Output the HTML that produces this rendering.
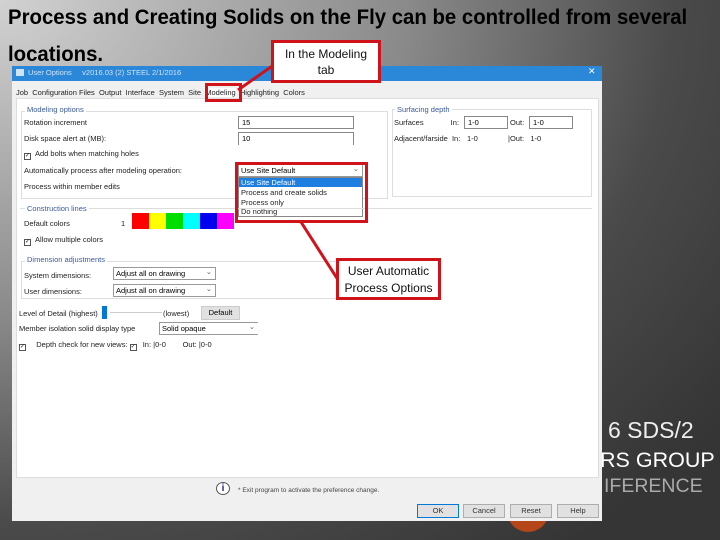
<!DOCTYPE html>
<html><head><meta charset="utf-8"><style>
*{margin:0;padding:0;box-sizing:border-box}
body{width:720px;height:540px;overflow:hidden;position:relative;font-family:"Liberation Sans",sans-serif;background:radial-gradient(ellipse 900px 700px at 0px 0px,#d2d2d2 0%,#8a8a8a 45%,#4a4a4a 75%,#353535 100%)}
.a{position:absolute;white-space:nowrap}
.t{font-weight:bold;font-size:21px;color:#000;transform:scaleX(0.97);transform-origin:left top}
.d{font-size:7.5px;color:#222}
.in{position:absolute;border:1px solid #888;background:#fff;font-size:7.5px;padding-left:3px;line-height:11px}
.sel{position:absolute;border:1px solid #999;background:#fff;font-size:7.5px;padding-left:2px;line-height:11px}
.sel:after{content:"⌄";position:absolute;right:3px;top:-2px;color:#666}
.grp{position:absolute;border:1px solid #ddd}
.gt{position:absolute;font-size:7.5px;color:#3a5a9a;background:#fff;padding:0 2px}
.cb{display:inline-block;width:7px;height:7px;border:1px solid #555;margin-right:4px;vertical-align:-1px;font-size:6px;line-height:5px}
.red{position:absolute;border:3px solid #d0121b}
.btn{position:absolute;top:504px;width:42px;height:14px;background:#e1e1e1;border:1px solid #adadad;font-size:7.5px;text-align:center;line-height:12px;color:#333}
</style></head><body>
<div class="a t" style="left:8px;top:6px">Process and Creating Solids on the Fly can be controlled from several</div>
<div class="a t" style="left:8px;top:43px">locations.</div>

<div class="a" style="left:507px;top:490px;width:42px;height:42px;border-radius:50%;background:#b5461a"></div>
<div class="a" style="left:608px;top:417px;font-size:23px;color:#eee">6 SDS/2</div>
<div class="a" style="left:600px;top:448px;font-size:21.5px;color:#fff">RS GROUP</div>
<div class="a" style="left:604px;top:475px;font-size:19.5px;color:#aaa">IFERENCE</div>

<div class="a" style="left:12px;top:66px;width:590px;height:455px;background:#f0f0f0"></div>
<div class="a" style="left:12px;top:66px;width:590px;height:15px;background:#2b88d8"></div>
<div class="a" style="left:16px;top:69px;width:8px;height:7px;background:#cfe3f5"></div>
<div class="a" style="left:28px;top:68px;font-size:7.5px;color:#cfe3f5">User Options &nbsp;&nbsp;&nbsp; v2016.03 (2) STEEL 2/1/2016</div>
<div class="a" style="left:588px;top:66px;font-size:9px;color:#fff">✕</div>
<div class="a d" style="left:16px;top:88px">Job&nbsp; Configuration Files&nbsp; Output&nbsp; Interface&nbsp; System&nbsp; Site&nbsp; <span style="background:#fff">Modeling</span>&nbsp; Highlighting&nbsp; Colors</div>
<div class="a" style="left:16px;top:98px;width:583px;height:380px;background:#fff;border:1px solid #ddd"></div>

<div class="grp" style="left:21px;top:111px;width:367px;height:88px"></div>
<div class="gt" style="left:25px;top:105px">Modeling options</div>
<div class="a d" style="left:24px;top:118px">Rotation increment</div>
<div class="in" style="left:238px;top:116px;width:116px;height:13px">15</div>
<div class="a d" style="left:24px;top:134px">Disk space alert at (MB):</div>
<div class="in" style="left:238px;top:132px;width:116px;height:13px;border-bottom:none">10</div>
<div class="a d" style="left:24px;top:149px"><span class="cb">✓</span>Add bolts when matching holes</div>
<div class="a d" style="left:24px;top:166px">Automatically process after modeling operation:</div>
<div class="sel" style="left:238px;top:164px;width:125px;height:13px">Use Site Default</div>
<div class="a" style="left:238px;top:177px;width:125px;height:40px;background:#fff;border:1px solid #888"></div>
<div class="a" style="left:239px;top:178px;width:123px;height:9px;background:#1e7fe0"></div>
<div class="a d" style="left:241px;top:178px;color:#fff">Use Site Default</div>
<div class="a d" style="left:241px;top:188px">Process and create solids</div>
<div class="a d" style="left:241px;top:198px">Process only</div>
<div class="a d" style="left:241px;top:207px">Do nothing</div>
<div class="a d" style="left:24px;top:182px">Process within member edits</div>

<div class="grp" style="left:392px;top:109px;width:200px;height:88px"></div>
<div class="gt" style="left:395px;top:105px">Surfacing depth</div>
<div class="a d" style="left:394px;top:118px">Surfaces &nbsp;&nbsp;&nbsp;&nbsp;&nbsp;&nbsp;&nbsp;&nbsp;&nbsp;&nbsp;&nbsp; In:</div>
<div class="in" style="left:464px;top:116px;width:44px;height:13px">1-0</div>
<div class="a d" style="left:510px;top:118px">Out:</div>
<div class="in" style="left:529px;top:116px;width:44px;height:13px">1-0</div>
<div class="a d" style="left:394px;top:134px">Adjacent/farside&nbsp; In:</div>
<div class="a d" style="left:467px;top:134px">1-0</div>
<div class="a d" style="left:508px;top:134px">|Out: &nbsp; 1-0</div>
<div class="a" style="left:20px;top:208px;width:572px;height:1px;background:#ddd"></div>

<div class="gt" style="left:25px;top:204px">Construction lines</div>
<div class="a d" style="left:24px;top:219px">Default colors</div>
<div class="a d" style="left:121px;top:219px">1</div>
<div class="a" style="left:132px;top:213px;width:17px;height:16px;background:#f00"></div>
<div class="a" style="left:149px;top:213px;width:17px;height:16px;background:#ff0"></div>
<div class="a" style="left:166px;top:213px;width:17px;height:16px;background:#0d0"></div>
<div class="a" style="left:183px;top:213px;width:17px;height:16px;background:#0ff"></div>
<div class="a" style="left:200px;top:213px;width:17px;height:16px;background:#00e"></div>
<div class="a" style="left:217px;top:213px;width:17px;height:16px;background:#f0f"></div>
<div class="a d" style="left:24px;top:235px"><span class="cb">✓</span>Allow multiple colors</div>

<div class="grp" style="left:21px;top:261px;width:365px;height:38px"></div>
<div class="gt" style="left:25px;top:255px">Dimension adjustments</div>
<div class="a d" style="left:24px;top:271px">System dimensions:</div>
<div class="sel" style="left:113px;top:267px;width:103px;height:13px">Adjust all on drawing</div>
<div class="a d" style="left:24px;top:287px">User dimensions:</div>
<div class="sel" style="left:113px;top:284px;width:103px;height:13px">Adjust all on drawing</div>

<div class="a d" style="left:19px;top:309px">Level of Detail (highest)</div>
<div class="a" style="left:110px;top:312px;width:52px;height:1px;background:#ccc"></div>
<div class="a" style="left:102px;top:306px;width:5px;height:13px;background:#0078d7"></div>
<div class="a d" style="left:163px;top:309px">(lowest)</div>
<div class="a" style="left:201px;top:306px;width:39px;height:14px;background:#e1e1e1;border:1px solid #ccc;font-size:7.5px;text-align:center;line-height:12px">Default</div>
<div class="a d" style="left:19px;top:324px">Member isolation solid display type</div>
<div class="sel" style="left:159px;top:322px;width:99px;height:13px;border-right:none">Solid opaque</div>
<div class="a d" style="left:19px;top:340px"><span class="cb">✓</span>&nbsp;&nbsp; Depth check for new views: <span class="cb">✓</span> In: |0-0 &nbsp;&nbsp;&nbsp;&nbsp;&nbsp;&nbsp; Out: |0-0</div>

<div class="a" style="left:216px;top:482px;width:14px;height:13px;border:1px solid #555;border-radius:50%;background:#fff;color:#1a1a9a;font-size:10px;font-weight:bold;text-align:center;line-height:11px">i</div>
<div class="a" style="left:238px;top:487px;font-size:6.5px;color:#444">* Exit program to activate the preference change.</div>
<div class="btn" style="left:417px;border-color:#0078d7">OK</div>
<div class="btn" style="left:463px">Cancel</div>
<div class="btn" style="left:510px">Reset</div>
<div class="btn" style="left:557px">Help</div>

<svg class="a" style="left:0;top:0" width="720" height="540">
<line x1="278" y1="62" x2="238" y2="90" stroke="#d0121b" stroke-width="3"/>
<line x1="301" y1="222" x2="340" y2="283" stroke="#d0121b" stroke-width="3"/>
</svg>
<div class="red" style="left:205px;top:83px;width:37px;height:19px"></div>
<div class="red" style="left:235px;top:162px;width:133px;height:61px"></div>
<div class="red" style="left:271px;top:40px;width:110px;height:43px;background:#fff;font-size:12px;text-align:center;line-height:16px;padding-top:3px;color:#111">In the Modeling<br>tab</div>
<div class="red" style="left:336px;top:258px;width:105px;height:42px;background:#fff;font-size:12px;text-align:center;line-height:17px;padding-top:2px;color:#111">User Automatic<br>Process Options</div>
</body></html>
